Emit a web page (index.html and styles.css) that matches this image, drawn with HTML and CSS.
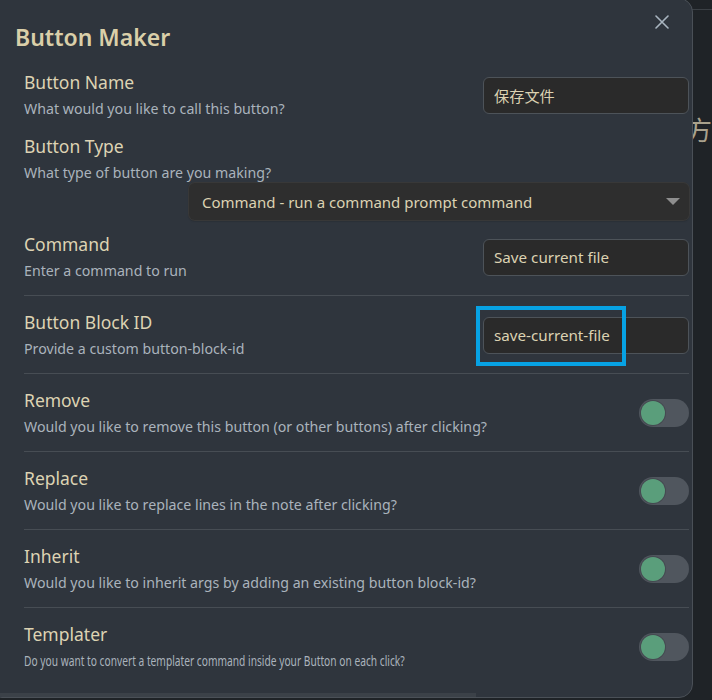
FILE: index.html
```html
<!DOCTYPE html>
<html lang="en">
<head>
<meta charset="utf-8">
<title>Button Maker</title>
<link rel="stylesheet" href="styles.css">
</head>
<body>
<div class="workspace">
  <div class="workspace-header"></div>
  <div class="workspace-text">方</div>
</div>

<div class="modal">
  <button class="modal-close" aria-label="Close">
    <svg width="14" height="14" viewBox="0 0 14 14"><path d="M1 1L13 13M13 1L1 13" stroke="#a9b5c0" stroke-width="1.6" fill="none" stroke-linecap="round"/></svg>
  </button>
  <h1 class="modal-title">Button Maker</h1>

  <div class="settings">
    <div class="setting-item plain first">
      <div class="setting-info">
        <div class="setting-name">Button Name</div>
        <div class="setting-desc">What would you like to call this button?</div>
      </div>
      <div class="setting-control"><input class="text-input" type="text" value="保存文件"></div>
    </div>

    <div class="setting-item plain wrap">
      <div class="setting-info">
        <div class="setting-name">Button Type</div>
        <div class="setting-desc">What type of button are you making?</div>
      </div>
      <div class="setting-control full">
        <div class="dropdown">
          <span>Command - run a command prompt command</span>
          <svg class="dropdown-arrow" width="14" height="8" viewBox="0 0 14 8"><path d="M0 0H14L7 7Z" fill="#8e8e8e"/></svg>
        </div>
      </div>
    </div>

    <div class="setting-item plain last">
      <div class="setting-info">
        <div class="setting-name">Command</div>
        <div class="setting-desc">Enter a command to run</div>
      </div>
      <div class="setting-control"><input class="text-input" type="text" value="Save current file"></div>
    </div>

    <div class="setting-item">
      <div class="setting-info">
        <div class="setting-name">Button Block ID</div>
        <div class="setting-desc">Provide a custom button-block-id</div>
      </div>
      <div class="setting-control">
        <div class="highlight-wrap">
          <input class="text-input" type="text" value="save-current-file">
          <div class="highlight"></div>
        </div>
      </div>
    </div>

    <div class="setting-item">
      <div class="setting-info">
        <div class="setting-name">Remove</div>
        <div class="setting-desc">Would you like to remove this button (or other buttons) after clicking?</div>
      </div>
      <div class="setting-control"><div class="toggle"><div class="knob"></div></div></div>
    </div>

    <div class="setting-item">
      <div class="setting-info">
        <div class="setting-name">Replace</div>
        <div class="setting-desc">Would you like to replace lines in the note after clicking?</div>
      </div>
      <div class="setting-control"><div class="toggle"><div class="knob"></div></div></div>
    </div>

    <div class="setting-item">
      <div class="setting-info">
        <div class="setting-name">Inherit</div>
        <div class="setting-desc">Would you like to inherit args by adding an existing button block-id?</div>
      </div>
      <div class="setting-control"><div class="toggle"><div class="knob"></div></div></div>
    </div>

    <div class="setting-item">
      <div class="setting-info narrow">
        <div class="setting-name">Templater</div>
        <div class="setting-desc">Do you want to convert a templater command inside your Button on each click?</div>
      </div>
      <div class="setting-control"><div class="toggle"><div class="knob"></div></div></div>
    </div>
  </div>
  <div class="footer-strip"></div>
</div>
</body>
</html>
```

FILE: styles.css
```css
html, body {
  margin: 0;
  padding: 0;
  height: 100%;
  overflow: hidden;
}
body {
  background: #1f2327;
  font-family: "Noto Sans", "Noto Sans CJK SC", sans-serif;
  position: relative;
}

.workspace {
  height: 100%;
}
.workspace-header {
  height: 9px;
  border-bottom: 1px solid #3b4045;
}
.workspace-text {
  margin-top: 104px;
  padding-left: 686px;
  font-size: 26px;
  line-height: 30px;
  color: #a9a18c;
  font-family: "Noto Sans CJK SC", sans-serif;
}

.modal {
  position: absolute;
  left: -12px;
  top: -2px;
  width: 705px;
  height: 700px;
  box-sizing: border-box;
  background: #2f353d;
  border: 1px solid #4a5057;
  border-radius: 14px;
  overflow: hidden;
}
.modal-close {
  position: absolute;
  right: 23px;
  top: 16px;
  width: 14px;
  height: 14px;
  padding: 0;
  border: 0;
  background: none;
  display: flex;
}
.modal-title {
  margin: 23px 0 0 26px;
  font-size: 23px;
  line-height: 30px;
  font-weight: 600;
  color: #dacfa9;
}

.settings {
  margin: 11px 3px 0 35px;
}
.setting-item {
  display: flex;
  align-items: center;
  justify-content: space-between;
  border-top: 1px solid #474d54;
  padding: 14px 0 13px;
}
.setting-item.plain {
  border-top: 0;
  padding: 7px 0;
}
.setting-item.last {
  padding: 5px 0 13px;
}
.setting-item.wrap {
  flex-wrap: wrap;
}
.setting-info {
  flex: 1 1 auto;
}
.setting-name {
  font-size: 17.5px;
  line-height: 24px;
  color: #ddd3b3;
}
.setting-desc {
  font-size: 14.2px;
  line-height: 22px;
  padding-top: 4px;
  color: #aab3bc;
}
.narrow .setting-desc {
  transform: scaleX(0.72);
  transform-origin: left center;
  white-space: nowrap;
}
.setting-control {
  flex: 0 0 auto;
  display: flex;
  justify-content: flex-end;
}
.setting-control.full {
  flex: 1 0 100%;
  margin-top: -1px;
}

.text-input {
  width: 206px;
  height: 37px;
  box-sizing: border-box;
  background: #2a2a2a;
  border: 1px solid #4d5359;
  border-radius: 6px;
  padding: 0 10px;
  font-family: "Noto Sans", "Noto Sans CJK SC", sans-serif;
  font-size: 15.2px;
  color: #dcd2b2;
  outline: none;
}

.dropdown {
  width: 500px;
  height: 37px;
  box-sizing: border-box;
  display: flex;
  align-items: center;
  justify-content: space-between;
  padding: 0 9px 0 13px;
  background: #2e2e2e;
  border-radius: 6px;
  box-shadow: 0 0 0 1px #383838, 0 1px 2px rgba(0,0,0,0.35);
  font-size: 15px;
  color: #dcd2b2;
}

.highlight-wrap {
  position: relative;
}
.highlight {
  position: absolute;
  left: -7px;
  top: -11px;
  width: 150px;
  height: 60px;
  box-sizing: border-box;
  border: 4px solid #07a2e4;
}

.toggle {
  width: 50px;
  height: 28px;
  border-radius: 14px;
  background: #50565e;
  display: flex;
  align-items: center;
  padding-left: 2px;
  box-sizing: border-box;
}
.knob {
  width: 24px;
  height: 24px;
  border-radius: 50%;
  background: #5a9e7b;
  box-shadow: 0 0 0 1px rgba(0,0,0,0.15);
}

.footer-strip {
  position: absolute;
  left: 0;
  bottom: -10px;
  width: 487px;
  height: 14px;
  background: #3b4148;
}
```
